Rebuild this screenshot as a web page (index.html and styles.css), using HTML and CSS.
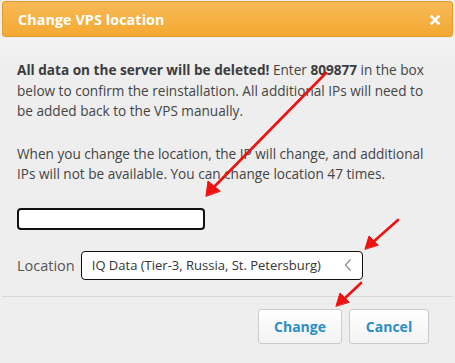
FILE: index.html
```html
<!DOCTYPE html>
<html>
<head>
<meta charset="utf-8">
<link rel="stylesheet" href="styles.css">
</head>
<body>
<div class="dialog">
  <div class="header">
    <span class="title">Change VPS location</span>
    <svg class="close" width="10" height="10" viewBox="0 0 10 10"><path d="M1.5 1.5 L8.5 8.5 M8.5 1.5 L1.5 8.5" stroke="#ffffff" stroke-width="2.6" stroke-linecap="square"/></svg>
  </div>
  <div class="content">
    <p class="para"><b>All data on the server will be deleted!</b> Enter <b>809877</b> in the box<br>below to confirm the reinstallation. All additional IPs will need to<br>be added back to the VPS manually.</p>
    <p class="para second">When you change the location, the IP will change, and additional<br>IPs will not be available. You can change location 47 times.</p>
    <div class="confirm"></div>
    <div class="loc-row">
      <span class="loc-label">Location</span>
      <div class="select">
        <span class="select-text">IQ Data (Tier-3, Russia, St. Petersburg)</span>
        <svg class="chev" width="8" height="14" viewBox="0 0 8 14"><path d="M6.5 1.5 L1.5 7 L6.5 12.5" fill="none" stroke="#888" stroke-width="1.2"/></svg>
      </div>
    </div>
  </div>
  <div class="footer">
    <div class="btn btn-change">Change</div>
    <div class="btn btn-cancel">Cancel</div>
  </div>
  <svg class="arrows" width="455" height="363" viewBox="0 0 455 363">
    <g stroke="#f01010" stroke-width="2.6" fill="#f01010" stroke-linecap="round">
      <line x1="326" y1="73" x2="212" y2="189"/>
      <polygon points="206,196 208,181 220,191" stroke-width="1" stroke-linejoin="round"/>
      <line x1="398" y1="220" x2="372" y2="243"/>
      <polygon points="365,249 369,236 378,245" stroke-width="1" stroke-linejoin="round"/>
      <line x1="361" y1="283" x2="343" y2="300"/>
      <polygon points="336,306 340,293 349,302" stroke-width="1" stroke-linejoin="round"/>
    </g>
  </svg>
</div>
</body>
</html>
```

FILE: styles.css
```css
html, body {
  margin: 0;
  padding: 0;
}
body {
  width: 455px;
  height: 363px;
  overflow: hidden;
  background: #eeeeee;
  font-family: "Open Sans", "DejaVu Sans", sans-serif;
}
.dialog {
  position: relative;
  width: 455px;
  height: 363px;
  background: linear-gradient(#eeeeee 0, #eeeeee 38px, #f4f4f4 39px, #efefef 58px, #eeeeee 70px);
  display: flex;
  flex-direction: column;
}
.header {
  margin: 1px 2px 0 2px;
  height: 34px;
  border: 1px solid #e39b2c;
  border-radius: 3px;
  background: linear-gradient(#f7b956, #f4a932);
  display: flex;
  align-items: center;
  justify-content: space-between;
  padding: 0 12px 0 15px;
}
.title {
  color: #ffffff;
  font-weight: 700;
  font-size: 14.3px;
  letter-spacing: 0.1px;
}
.close {
  display: block;
  margin-top: 1px;
}
.content {
  padding: 23px 17px 0 17px;
  color: #444444;
  font-size: 13.6px;
}
.para {
  margin: 0;
  line-height: 20.6px;
  white-space: nowrap;
}
.para b {
  font-weight: 700;
  color: #3c3c3c;
}
.second {
  margin-top: 22px;
}
.confirm {
  margin-top: 23px;
  width: 184px;
  height: 18px;
  border: 2px solid #111111;
  border-radius: 4px;
  background: #ffffff;
}
.loc-row {
  margin-top: 21px;
  display: flex;
  align-items: center;
  gap: 6px;
}
.loc-label {
  font-size: 14.5px;
  color: #555555;
}
.select {
  height: 27px;
  border: 1px solid #111111;
  border-radius: 4px;
  background: #ffffff;
  display: flex;
  align-items: center;
  justify-content: space-between;
  padding: 0 10px 0 10px;
  box-sizing: content-box;
  width: 260px;
}
.select-text {
  font-size: 13px;
  color: #333333;
}
.chev {
  display: block;
}
.footer {
  margin: 16px 2px 0 2px;
  border-top: 1px solid #d8d8d8;
  padding: 12px 24px 0 0;
  display: flex;
  justify-content: flex-end;
  gap: 7px;
}
.btn {
  height: 33px;
  border: 1px solid #cccccc;
  border-radius: 3px;
  background: linear-gradient(#ffffff, #f3f3f3);
  color: #2b8fc6;
  font-weight: 700;
  font-size: 14px;
  display: flex;
  align-items: center;
  justify-content: center;
}
.btn-change {
  width: 82px;
}
.btn-cancel {
  width: 78px;
}
.arrows {
  position: absolute;
  left: 0;
  top: 0;
  pointer-events: none;
}
```
